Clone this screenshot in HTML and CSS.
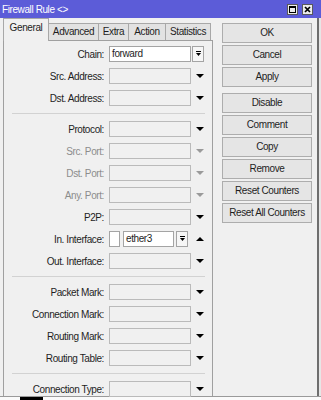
FILE: index.html
```html
<!DOCTYPE html>
<html lang="en">
<head>
    <meta charset="UTF-8">
    <title>Firewall Rule</title>
    <link rel="stylesheet" href="styles.css">
</head>
<body>

<div class="window">
    <div class="titlebar">
        <span class="title">Firewall Rule &lt;&gt;</span>
        <span class="tb-btn max">
            <svg width="9" height="9" viewBox="0 0 9 9"><rect x="1.5" y="1.5" width="6" height="6" fill="none" stroke="#000"/><rect x="1" y="1" width="7" height="2" fill="#000"/></svg>
        </span>
        <span class="tb-btn">
            <svg width="9" height="9" viewBox="0 0 9 9"><path d="M2 2l5 5M7 2l-5 5" stroke="#000" stroke-width="1.7"/></svg>
        </span>
    </div>

    <div class="frame">
        <div class="left">
            <div class="tabs">
                <div class="tab active w-general">General</div>
                <div class="tab w-advanced">Advanced</div>
                <div class="tab w-extra">Extra</div>
                <div class="tab w-action">Action</div>
                <div class="tab w-stats">Statistics</div>
            </div>

            <div class="panel">
                <div class="group">
                    <div class="row">
                        <label>Chain:</label>
                        <span class="field on">forward</span>
                        <span class="pick">
                            <svg width="7" height="6" viewBox="0 0 7 6"><rect x="1" y="0" width="5" height="1" fill="#000"/><path d="M1 2h5l-2.5 3z" fill="#000"/></svg>
                        </span>
                    </div>
                    <div class="row">
                        <label>Src. Address:</label>
                        <span class="field"></span>
                        <span class="arrow"></span>
                    </div>
                    <div class="row">
                        <label>Dst. Address:</label>
                        <span class="field"></span>
                        <span class="arrow"></span>
                    </div>
                </div>

                <div class="sep"></div>

                <div class="group">
                    <div class="row">
                        <label>Protocol:</label>
                        <span class="field"></span>
                        <span class="arrow"></span>
                    </div>
                    <div class="row">
                        <label class="off">Src. Port:</label>
                        <span class="field"></span>
                        <span class="arrow off"></span>
                    </div>
                    <div class="row">
                        <label class="off">Dst. Port:</label>
                        <span class="field"></span>
                        <span class="arrow off"></span>
                    </div>
                    <div class="row">
                        <label class="off">Any. Port:</label>
                        <span class="field"></span>
                        <span class="arrow off"></span>
                    </div>
                    <div class="row">
                        <label>P2P:</label>
                        <span class="field"></span>
                        <span class="arrow"></span>
                    </div>
                    <div class="row">
                        <label>In. Interface:</label>
                        <span class="check"></span>
                        <span class="field on short">ether3</span>
                        <span class="pick near">
                            <svg width="7" height="6" viewBox="0 0 7 6"><rect x="1" y="0" width="5" height="1" fill="#000"/><path d="M1 2h5l-2.5 3z" fill="#000"/></svg>
                        </span>
                        <span class="arrow up"></span>
                    </div>
                    <div class="row">
                        <label>Out. Interface:</label>
                        <span class="field"></span>
                        <span class="arrow"></span>
                    </div>
                </div>

                <div class="sep"></div>

                <div class="group">
                    <div class="row">
                        <label>Packet Mark:</label>
                        <span class="field"></span>
                        <span class="arrow"></span>
                    </div>
                    <div class="row">
                        <label>Connection Mark:</label>
                        <span class="field"></span>
                        <span class="arrow"></span>
                    </div>
                    <div class="row">
                        <label>Routing Mark:</label>
                        <span class="field"></span>
                        <span class="arrow"></span>
                    </div>
                    <div class="row">
                        <label>Routing Table:</label>
                        <span class="field"></span>
                        <span class="arrow"></span>
                    </div>
                </div>

                <div class="sep"></div>

                <div class="group">
                    <div class="row">
                        <label>Connection Type:</label>
                        <span class="field"></span>
                        <span class="arrow"></span>
                    </div>
                </div>
            </div>
        </div>

        <!-- side buttons -->
        <div class="buttons">
            <div class="btn">OK</div>
            <div class="btn">Cancel</div>
            <div class="btn">Apply</div>
            <div class="btn spaced">Disable</div>
            <div class="btn">Comment</div>
            <div class="btn">Copy</div>
            <div class="btn">Remove</div>
            <div class="btn">Reset Counters</div>
            <div class="btn">Reset All Counters</div>
        </div>
    </div>

    <div class="bottom"><span class="blk"></span></div>
</div>

</body>
</html>
```

FILE: styles.css
```css
/* General styling */
body {
    margin: 0;
    width: 321px;
    height: 400px;
    overflow: hidden;
    background: #e6e6e6;
    font-family: 'Liberation Sans', Arial, sans-serif;
    font-size: 10px;
    letter-spacing: -0.4px;
    color: #1e1e1e;
}
.window {
    width: 321px;
}

/* Title bar */
.titlebar {
    height: 18px;
    background: #5c5cd8;
    color: #fff;
    display: flex;
    align-items: center;
    padding: 0 8px 0 2px;
}
.title {
    flex: 1;
}
.tb-btn {
    width: 11px;
    height: 11px;
    box-sizing: border-box;
    background: #ececec;
    border: 1px solid #5a5a5a;
    display: flex;
    align-items: center;
    justify-content: center;
}
.tb-btn.max {
    margin-right: 4px;
}

/* Window body */
.frame {
    display: flex;
    width: 319px;
    height: 378px;
    box-sizing: border-box;
    padding-left: 3px;
    background: #f0f0f0;
    border-right: 2px solid #6e6e6e;
}
.left {
    width: 210px;
}

/* Tabs */
.tabs {
    display: flex;
    align-items: flex-end;
    height: 22px;
}
.tab {
    height: 17px;
    box-sizing: border-box;
    margin-left: -1px;
    border: 1px solid #a8a8a8;
    border-bottom: none;
    background: #e2e2e2;
    text-align: center;
    line-height: 16px;
}
.tab.active {
    position: relative;
    z-index: 1;
    height: 23px;
    margin-left: 0;
    margin-bottom: -1px;
    background: #f0f0f0;
    line-height: 18px;
}
.w-general { width: 46px; }
.w-advanced { width: 51px; }
.w-extra { width: 31px; }
.w-action { width: 38px; }
.w-stats { width: 46px; }

.panel {
    height: 356px;
    box-sizing: border-box;
    padding-top: 5px;
    border: 1px solid #a0a0a0;
    border-bottom: none;
}

/* Form rows */
.row {
    display: flex;
    align-items: center;
    height: 16px;
    margin-bottom: 6px;
}
.row:last-child {
    margin-bottom: 0;
}
label {
    width: 100px;
    margin-right: 5px;
    text-align: right;
}
label.off {
    color: #8c8c8c;
}
.field {
    width: 82px;
    height: 16px;
    box-sizing: border-box;
    border: 1px solid #bababa;
    background: #f0f0f0;
}
.field.on {
    background: #fff;
    border-color: #a4a4a4;
    padding-left: 2px;
    line-height: 14px;
}
.field.short {
    width: 51px;
}
.check {
    width: 11px;
    height: 16px;
    box-sizing: border-box;
    margin-right: 3px;
    border: 1px solid #a4a4a4;
    background: #fff;
}
.pick {
    width: 12px;
    height: 16px;
    box-sizing: border-box;
    margin-left: 1px;
    border: 1px solid #a4a4a4;
    background: #f6f6f6;
    display: flex;
    align-items: center;
    justify-content: center;
}
.pick.near {
    margin-left: 2px;
}
.arrow {
    width: 0;
    height: 0;
    margin-left: 5px;
    border-left: 4px solid transparent;
    border-right: 4px solid transparent;
    border-top: 4px solid #000;
}
.arrow.off {
    border-top-color: #9a9a9a;
}
.arrow.up {
    margin-left: 8px;
    border-top: none;
    border-bottom: 4px solid #000;
}
.sep {
    height: 1px;
    margin: 7px 7px 7px 8px;
    background: #d2d2d2;
}

/* Side buttons */
.buttons {
    width: 90px;
    margin-left: 9px;
    padding-top: 5px;
}
.btn {
    height: 20px;
    box-sizing: border-box;
    margin-bottom: 2px;
    border: 1px solid #adadad;
    background: #e5e5e5;
    text-align: center;
    line-height: 18px;
}
.btn.spaced {
    margin-top: 6px;
}

.bottom {
    height: 4px;
    box-sizing: border-box;
    border-top: 1px solid #9a9a9a;
    background: #fafafa;
    display: flex;
}
.blk {
    width: 23px;
    margin-left: 20px;
    background: #000;
}
```
